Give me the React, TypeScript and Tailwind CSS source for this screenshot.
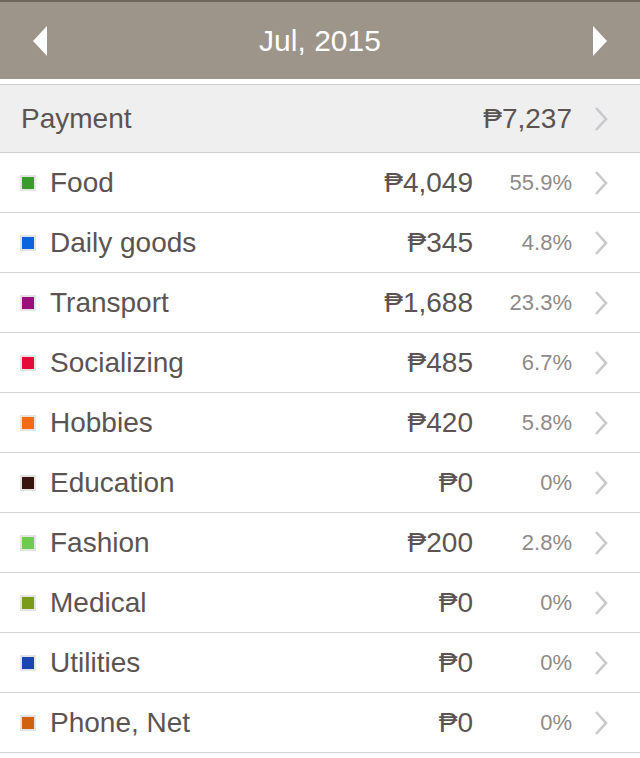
import React from 'react';

interface Category {
  name: string;
  color: string;
  amount: string;
  percent: string;
}

const categories: Category[] = [
  { name: 'Food', color: '#3a9a2c', amount: '₱4,049', percent: '55.9%' },
  { name: 'Daily goods', color: '#0b63de', amount: '₱345', percent: '4.8%' },
  { name: 'Transport', color: '#9a0f7c', amount: '₱1,688', percent: '23.3%' },
  { name: 'Socializing', color: '#e5093a', amount: '₱485', percent: '6.7%' },
  { name: 'Hobbies', color: '#f26a14', amount: '₱420', percent: '5.8%' },
  { name: 'Education', color: '#3a1510', amount: '₱0', percent: '0%' },
  { name: 'Fashion', color: '#6fcb4f', amount: '₱200', percent: '2.8%' },
  { name: 'Medical', color: '#7a9a1a', amount: '₱0', percent: '0%' },
  { name: 'Utilities', color: '#1b45b0', amount: '₱0', percent: '0%' },
  { name: 'Phone, Net', color: '#d0620e', amount: '₱0', percent: '0%' },
];

const Chevron = () => (
  <svg width="16" height="26" viewBox="0 0 16 26" className="shrink-0">
    <path d="M3 2 L13 13 L3 24" fill="none" stroke="#c8c8cd" strokeWidth="2.6" strokeLinejoin="miter" />
  </svg>
);

const App: React.FC = () => {
  return (
    <div className="w-[640px] h-[758px] bg-white overflow-hidden text-[#5b5452]" style={{ fontFamily: '"Liberation Sans", Arial, sans-serif' }}>
      {/* header */}
      <div className="h-[79px] bg-[#9e958a] border-t-2 border-[#6f675e] flex items-center justify-between px-[33px]">
        <svg width="14" height="30" viewBox="0 0 14 30">
          <path d="M14 0 L0 15 L14 30 Z" fill="#fff" />
        </svg>
        <div className="text-white text-[30px]">Jul, 2015</div>
        <svg width="14" height="30" viewBox="0 0 14 30">
          <path d="M0 0 L14 15 L0 30 Z" fill="#fff" />
        </svg>
      </div>

      <div className="h-[5px]" />

      {/* payment total */}
      <div className="h-[69px] bg-[#efefef] border-y border-[#cfcfd2] flex items-center pl-[21px] pr-[31px]">
        <div className="flex-1 text-[28px]">Payment</div>
        <div className="text-[28px] mr-[21px]">₱7,237</div>
        <Chevron />
      </div>

      {categories.map((c) => (
        <div key={c.name} className="h-[60px] border-b border-[#d4d4d6] flex items-center pl-[20px] pr-[31px]">
          <div className="w-[16px] h-[16px] p-[2px] bg-[#e4e4e4] mr-[14px] shrink-0">
            <div className="w-full h-full" style={{ backgroundColor: c.color }} />
          </div>
          <div className="flex-1 text-[28px]">{c.name}</div>
          <div className="text-[28px] text-right">{c.amount}</div>
          <div className="w-[99px] text-right text-[22px] text-[#8e8a89] mr-[21px]">{c.percent}</div>
          <Chevron />
        </div>
      ))}
    </div>
  );
};

export default App;
